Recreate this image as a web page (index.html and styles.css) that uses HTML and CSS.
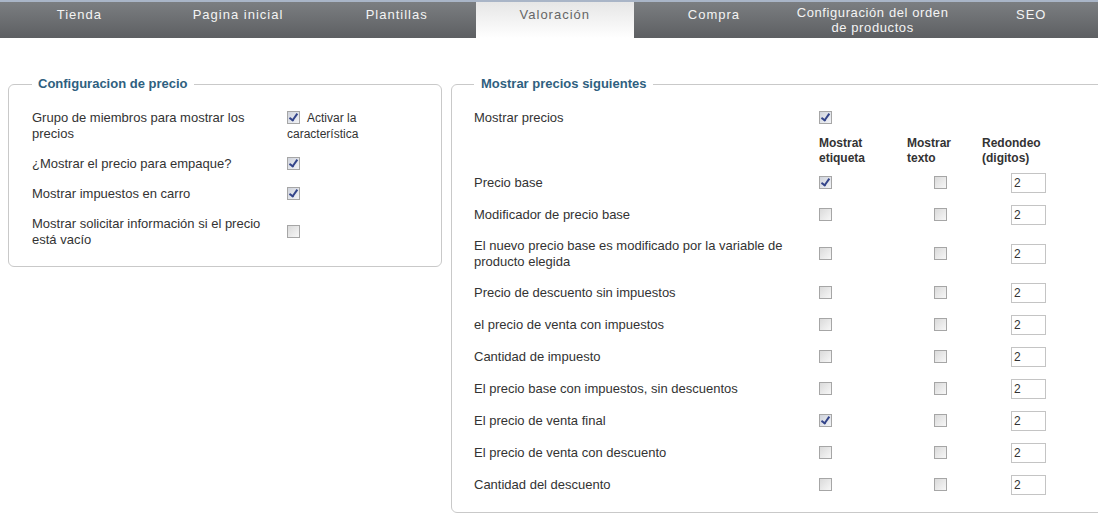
FILE: index.html
```html
<!DOCTYPE html>
<html lang="es">
<head>
    <meta charset="UTF-8">
    <title>Valoración</title>
    <link rel="stylesheet" href="styles.css">
</head>
<body>
    <div class="tabs">
        <div class="tab">Tienda</div>
        <div class="tab">Pagina inicial</div>
        <div class="tab">Plantillas</div>
        <div class="tab active">Valoración</div>
        <div class="tab">Compra</div>
        <div class="tab two-line">Configuración del orden<br>de productos</div>
        <div class="tab">SEO</div>
    </div>

    <div class="content">
        <fieldset class="panel panel-left">
            <legend class="panel-title">Configuracion de precio</legend>

            <div class="opt-row">
                <div class="opt-label">Grupo de miembros para mostrar los precios</div>
                <div class="opt-value"><span class="cb on"></span>Activar la característica</div>
            </div>
            <div class="opt-row">
                <div class="opt-label">¿Mostrar el precio para empaque?</div>
                <div class="opt-value"><span class="cb on"></span></div>
            </div>
            <div class="opt-row">
                <div class="opt-label">Mostrar impuestos en carro</div>
                <div class="opt-value"><span class="cb on"></span></div>
            </div>
            <div class="opt-row">
                <div class="opt-label">Mostrar solicitar información si el precio está vacío</div>
                <div class="opt-value"><span class="cb"></span></div>
            </div>
        </fieldset>

        <fieldset class="panel panel-right">
            <legend class="panel-title">Mostrar precios siguientes</legend>

            <div class="price-row">
                <span class="price-label">Mostrar precios</span>
                <span><span class="cb on"></span></span>
            </div>
            <div class="price-row price-head">
                <span></span>
                <span>Mostrat<br>etiqueta</span>
                <span>Mostrar<br>texto</span>
                <span>Redondeo<br>(digitos)</span>
            </div>

            <div class="price-row">
                <span class="price-label">Precio base</span>
                <span><span class="cb on"></span></span>
                <span class="col-text"><span class="cb"></span></span>
                <span class="col-digits"><input class="digits" type="text" value="2"></span>
            </div>
            <div class="price-row">
                <span class="price-label">Modificador de precio base</span>
                <span><span class="cb"></span></span>
                <span class="col-text"><span class="cb"></span></span>
                <span class="col-digits"><input class="digits" type="text" value="2"></span>
            </div>
            <div class="price-row">
                <span class="price-label">El nuevo precio base es modificado por la variable de producto elegida</span>
                <span><span class="cb"></span></span>
                <span class="col-text"><span class="cb"></span></span>
                <span class="col-digits"><input class="digits" type="text" value="2"></span>
            </div>
            <div class="price-row">
                <span class="price-label">Precio de descuento sin impuestos</span>
                <span><span class="cb"></span></span>
                <span class="col-text"><span class="cb"></span></span>
                <span class="col-digits"><input class="digits" type="text" value="2"></span>
            </div>
            <div class="price-row">
                <span class="price-label">el precio de venta con impuestos</span>
                <span><span class="cb"></span></span>
                <span class="col-text"><span class="cb"></span></span>
                <span class="col-digits"><input class="digits" type="text" value="2"></span>
            </div>
            <div class="price-row">
                <span class="price-label">Cantidad de impuesto</span>
                <span><span class="cb"></span></span>
                <span class="col-text"><span class="cb"></span></span>
                <span class="col-digits"><input class="digits" type="text" value="2"></span>
            </div>
            <div class="price-row">
                <span class="price-label">El precio base con impuestos, sin descuentos</span>
                <span><span class="cb"></span></span>
                <span class="col-text"><span class="cb"></span></span>
                <span class="col-digits"><input class="digits" type="text" value="2"></span>
            </div>
            <div class="price-row">
                <span class="price-label">El precio de venta final</span>
                <span><span class="cb on"></span></span>
                <span class="col-text"><span class="cb"></span></span>
                <span class="col-digits"><input class="digits" type="text" value="2"></span>
            </div>
            <div class="price-row">
                <span class="price-label">El precio de venta con descuento</span>
                <span><span class="cb"></span></span>
                <span class="col-text"><span class="cb"></span></span>
                <span class="col-digits"><input class="digits" type="text" value="2"></span>
            </div>
            <div class="price-row">
                <span class="price-label">Cantidad del descuento</span>
                <span><span class="cb"></span></span>
                <span class="col-text"><span class="cb"></span></span>
                <span class="col-digits"><input class="digits" type="text" value="2"></span>
            </div>
        </fieldset>
    </div>
</body>
</html>
```

FILE: styles.css
```css
* {
    margin: 0;
    padding: 0;
    box-sizing: border-box;
}

body {
    font-family: "Liberation Sans", Arial, sans-serif;
    font-size: 12px;
    line-height: 16px;
    color: #333;
    background: #fff;
    overflow: hidden;
}

/* barra de pestañas */
.tabs {
    display: grid;
    grid-template-columns: repeat(7, 158.67px);
    height: 38px;
    border-top: 2px solid #a9b5c7;
    background: linear-gradient(#7b7e81, #5d5f62);
}

.tab {
    text-align: center;
    color: #f4f4f4;
    font-size: 13px;
    letter-spacing: 1px;
    padding-top: 5px;
    line-height: 16px;
    white-space: nowrap;
}

.tab.two-line {
    padding-top: 3px;
    line-height: 15px;
    letter-spacing: 0.6px;
}

.tab.active {
    color: #666;
    margin-right: 1px;
    background: linear-gradient(#e6e6e6, #fff);
}

.content {
    display: flex;
    align-items: flex-start;
    gap: 9px;
    padding: 38px 0 0 8px;
}

/* cajas con titulo */
.panel {
    border: 1px solid #c9c9c9;
    border-radius: 6px;
    flex-shrink: 0;
}

.panel-left {
    width: 434px;
    padding: 11px 23px 11px 23px;
}

.panel-right {
    width: 700px;
    padding: 10px 22px 11px 22px;
}

.panel-title {
    font-size: 13px;
    font-weight: bold;
    line-height: 16px;
    color: #2f5f80;
    padding: 0 6px;
}

.panel-right .panel-title {
    padding: 0 7px;
}

.opt-row {
    display: grid;
    grid-template-columns: 245px 1fr;
    column-gap: 10px;
    align-items: center;
    padding: 7px 0;
}

.opt-label {
    font-size: 13px;
}

.opt-value .cb {
    margin-right: 7px;
}

.price-row {
    display: grid;
    grid-template-columns: 345px 88px 75px 1fr;
    align-items: center;
    min-height: 32px;
    padding: 7px 0;
}

.price-label {
    max-width: 320px;
    font-size: 13px;
}

.price-head {
    min-height: 0;
    padding: 2px 0 1px;
    line-height: 15px;
    font-weight: bold;
}

.col-text .cb {
    margin-left: 27px;
}

.col-digits {
    padding-left: 29px;
}

/* casillas */
.cb {
    display: inline-block;
    position: relative;
    width: 13px;
    height: 13px;
    vertical-align: -2px;
    border: 1px solid #a6a6a6;
    background: linear-gradient(135deg, #dadada, #f7f7f7);
}

.cb.on {
    background: linear-gradient(135deg, #cfd3dc, #f2f3f6);
}

.cb.on::after {
    content: "";
    position: absolute;
    left: 3px;
    top: 0px;
    width: 3px;
    height: 7px;
    border-right: 2px solid #33448a;
    border-bottom: 2px solid #33448a;
    transform: rotate(35deg);
}

.digits {
    display: block;
    width: 35px;
    height: 20px;
    margin: -1px 0;
    border: 1px solid #c4c4c4;
    padding: 0 2px;
    font-family: "Liberation Sans", Arial, sans-serif;
    font-size: 12px;
    color: #333;
    background: #fff;
}
```
